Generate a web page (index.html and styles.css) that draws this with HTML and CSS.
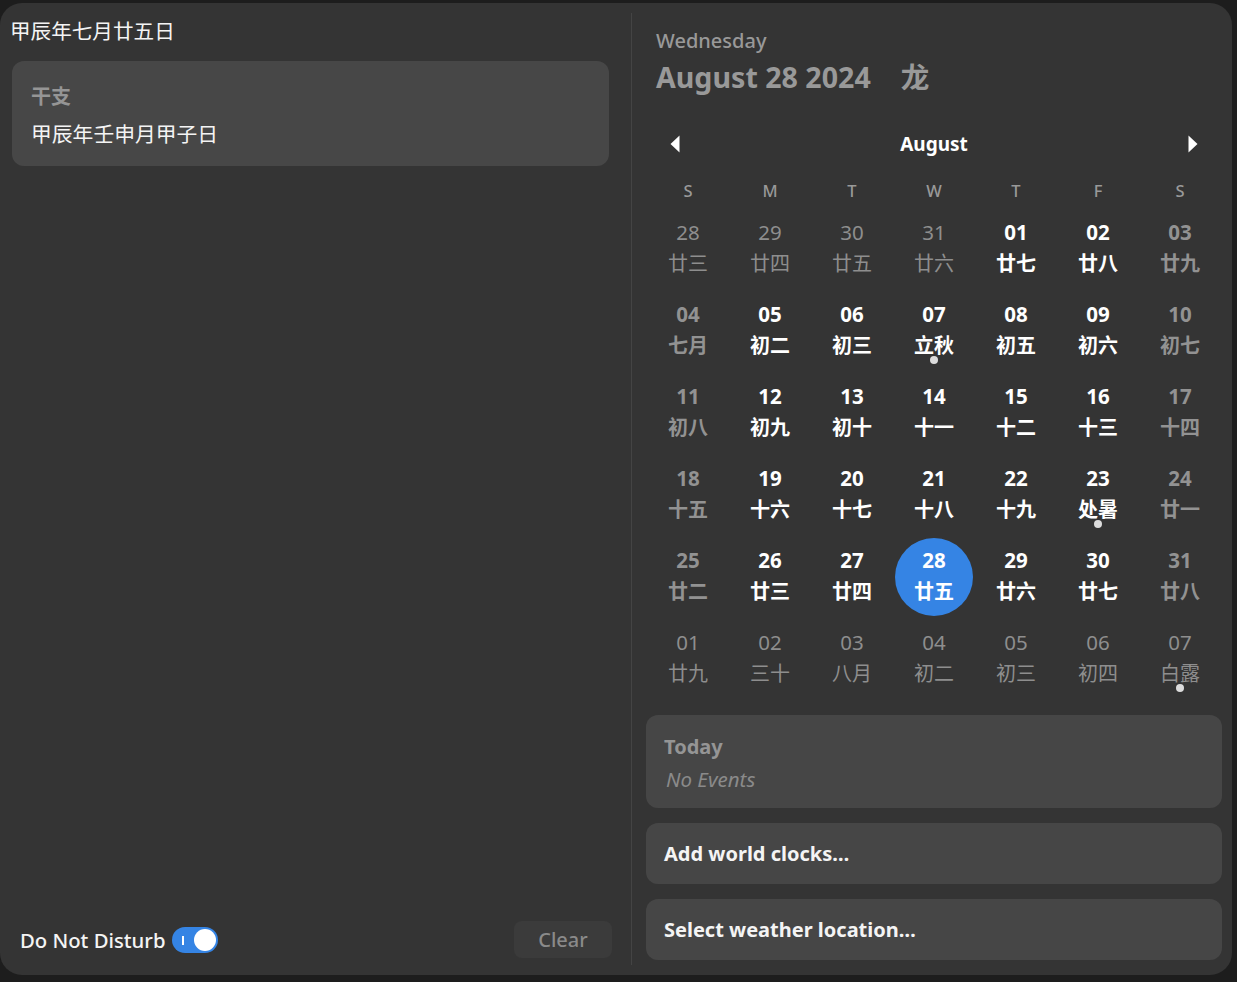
FILE: index.html
```html
<!DOCTYPE html>
<html lang="zh">
<head>
<meta charset="utf-8">
<title>Calendar</title>
<link rel="stylesheet" href="styles.css">
</head>
<body>
<div class="panel">
  <section class="left">
    <div class="lunar-title">甲辰年七月廿五日</div>
    <div class="ganzhi">
      <div class="gz-label">干支</div>
      <div class="gz-value">甲辰年壬申月甲子日</div>
    </div>
    <div class="spacer"></div>
    <div class="bottom-row">
      <div class="dnd">
        <span class="dnd-label">Do Not Disturb</span>
        <span class="switch"><span class="switch-mark"></span><span class="knob"></span></span>
      </div>
      <div class="clear-btn">Clear</div>
    </div>
  </section>
  <div class="separator"></div>
  <section class="right">
    <div class="date-head">
      <div class="weekday">Wednesday</div>
      <div class="fulldate">August 28 2024<span class="zodiac">龙</span></div>
    </div>
    <div class="month-nav">
      <span class="nav-btn"><svg width="10" height="18" viewBox="0 0 10 18"><polygon points="9.5,0.5 9.5,17.5 0.5,9" fill="#fff"/></svg></span>
      <span class="month-name">August</span>
      <span class="nav-btn"><svg width="10" height="18" viewBox="0 0 10 18"><polygon points="0.5,0.5 0.5,17.5 9.5,9" fill="#fff"/></svg></span>
    </div>
    <div class="weekdays">
      <span>S</span><span>M</span><span>T</span><span>W</span><span>T</span><span>F</span><span>S</span>
    </div>
    <div class="grid">
      <div class="cell"><div class="d other"><span class="n">28</span><span class="l">廿三</span></div></div>
      <div class="cell"><div class="d other"><span class="n">29</span><span class="l">廿四</span></div></div>
      <div class="cell"><div class="d other"><span class="n">30</span><span class="l">廿五</span></div></div>
      <div class="cell"><div class="d other"><span class="n">31</span><span class="l">廿六</span></div></div>
      <div class="cell"><div class="d"><span class="n">01</span><span class="l">廿七</span></div></div>
      <div class="cell"><div class="d"><span class="n">02</span><span class="l">廿八</span></div></div>
      <div class="cell"><div class="d wknd"><span class="n">03</span><span class="l">廿九</span></div></div>

      <div class="cell"><div class="d wknd"><span class="n">04</span><span class="l">七月</span></div></div>
      <div class="cell"><div class="d"><span class="n">05</span><span class="l">初二</span></div></div>
      <div class="cell"><div class="d"><span class="n">06</span><span class="l">初三</span></div></div>
      <div class="cell"><div class="d"><span class="n">07</span><span class="l">立秋</span><span class="dot"></span></div></div>
      <div class="cell"><div class="d"><span class="n">08</span><span class="l">初五</span></div></div>
      <div class="cell"><div class="d"><span class="n">09</span><span class="l">初六</span></div></div>
      <div class="cell"><div class="d wknd"><span class="n">10</span><span class="l">初七</span></div></div>

      <div class="cell"><div class="d wknd"><span class="n">11</span><span class="l">初八</span></div></div>
      <div class="cell"><div class="d"><span class="n">12</span><span class="l">初九</span></div></div>
      <div class="cell"><div class="d"><span class="n">13</span><span class="l">初十</span></div></div>
      <div class="cell"><div class="d"><span class="n">14</span><span class="l">十一</span></div></div>
      <div class="cell"><div class="d"><span class="n">15</span><span class="l">十二</span></div></div>
      <div class="cell"><div class="d"><span class="n">16</span><span class="l">十三</span></div></div>
      <div class="cell"><div class="d wknd"><span class="n">17</span><span class="l">十四</span></div></div>

      <div class="cell"><div class="d wknd"><span class="n">18</span><span class="l">十五</span></div></div>
      <div class="cell"><div class="d"><span class="n">19</span><span class="l">十六</span></div></div>
      <div class="cell"><div class="d"><span class="n">20</span><span class="l">十七</span></div></div>
      <div class="cell"><div class="d"><span class="n">21</span><span class="l">十八</span></div></div>
      <div class="cell"><div class="d"><span class="n">22</span><span class="l">十九</span></div></div>
      <div class="cell"><div class="d"><span class="n">23</span><span class="l">处暑</span><span class="dot"></span></div></div>
      <div class="cell"><div class="d wknd"><span class="n">24</span><span class="l">廿一</span></div></div>

      <div class="cell"><div class="d wknd"><span class="n">25</span><span class="l">廿二</span></div></div>
      <div class="cell"><div class="d"><span class="n">26</span><span class="l">廿三</span></div></div>
      <div class="cell"><div class="d"><span class="n">27</span><span class="l">廿四</span></div></div>
      <div class="cell"><div class="d today"><span class="n">28</span><span class="l">廿五</span></div></div>
      <div class="cell"><div class="d"><span class="n">29</span><span class="l">廿六</span></div></div>
      <div class="cell"><div class="d"><span class="n">30</span><span class="l">廿七</span></div></div>
      <div class="cell"><div class="d wknd"><span class="n">31</span><span class="l">廿八</span></div></div>

      <div class="cell"><div class="d other"><span class="n">01</span><span class="l">廿九</span></div></div>
      <div class="cell"><div class="d other"><span class="n">02</span><span class="l">三十</span></div></div>
      <div class="cell"><div class="d other"><span class="n">03</span><span class="l">八月</span></div></div>
      <div class="cell"><div class="d other"><span class="n">04</span><span class="l">初二</span></div></div>
      <div class="cell"><div class="d other"><span class="n">05</span><span class="l">初三</span></div></div>
      <div class="cell"><div class="d other"><span class="n">06</span><span class="l">初四</span></div></div>
      <div class="cell"><div class="d other"><span class="n">07</span><span class="l">白露</span><span class="dot"></span></div></div>
    </div>
    <div class="card events">
      <div class="ev-title">Today</div>
      <div class="ev-none">No Events</div>
    </div>
    <div class="card action">Add world clocks…</div>
    <div class="card action">Select weather location…</div>
  </section>
</div>
</body>
</html>
```
FILE: styles.css
```css
* { box-sizing: border-box; margin: 0; padding: 0; }

body {
  background: #1d1d1d;
  font-family: "Noto Sans", "Noto Sans CJK SC", sans-serif;
  color: #fff;
  width: 1237px;
  height: 982px;
  overflow: hidden;
}

.panel {
  margin-top: 3px;
  width: 1232px;
  height: 972px;
  background: #343434;
  border-radius: 22px;
  display: flex;
}

/* ---------- left column ---------- */
.left {
  width: 631px;
  display: flex;
  flex-direction: column;
  padding: 14px 0 17px 10px;
}

.lunar-title {
  font-size: 20.6px;
  line-height: 28px;
  color: #f4f4f4;
}

.ganzhi {
  margin: 16px 0 0 2px;
  width: 597px;
  background: #474747;
  border-radius: 12px;
  padding: 22px 19px 18px;
}

.gz-label {
  font-size: 20px;
  line-height: 28px;
  font-weight: 700;
  color: #959595;
}

.gz-value {
  margin-top: 9px;
  font-size: 20.8px;
  line-height: 28px;
  color: #f4f4f4;
}

.spacer { flex: 1; }

.bottom-row {
  width: 602px;
  height: 37px;
  display: flex;
  align-items: center;
  justify-content: space-between;
  padding-left: 10px;
}

.dnd {
  display: flex;
  align-items: center;
  gap: 7px;
}

.dnd-label {
  font-size: 20.3px;
  font-weight: 500;
  color: #f4f4f4;
}

.switch {
  position: relative;
  width: 46px;
  height: 26px;
  border-radius: 13px;
  background: #3584e4;
  display: block;
}

.switch-mark {
  position: absolute;
  left: 10px;
  top: 9px;
  width: 2px;
  height: 9px;
  background: #fff;
}

.knob {
  position: absolute;
  right: 2px;
  top: 2px;
  width: 22px;
  height: 22px;
  border-radius: 50%;
  background: #fff;
}

.clear-btn {
  width: 98px;
  height: 37px;
  border-radius: 8px;
  background: #3b3b3b;
  color: #8a8a8a;
  font-size: 20px;
  font-weight: 500;
  display: flex;
  align-items: center;
  justify-content: center;
}

.separator {
  width: 1px;
  margin: 10px 0;
  background: #444;
}

/* ---------- right column ---------- */
.right {
  width: 600px;
  padding: 24px 10px 15px 14px;
  display: flex;
  flex-direction: column;
}

.date-head { padding-left: 10px; }

.weekday {
  font-size: 20px;
  line-height: 28px;
  font-weight: 500;
  color: #999;
}

.fulldate {
  margin-top: 4px;
  font-size: 28.6px;
  line-height: 36px;
  font-weight: 700;
  color: #999;
}

.zodiac { margin-left: 30px; }

.month-nav {
  margin: 29px 0 0 1px;
  width: 574px;
  height: 40px;
  display: flex;
  align-items: center;
  justify-content: space-between;
}

.nav-btn {
  width: 56px;
  height: 40px;
  display: flex;
  align-items: center;
  justify-content: center;
}

.month-name {
  font-size: 19px;
  font-weight: 700;
  color: #fff;
}

.weekdays {
  margin: 8px 0 0 1px;
  width: 574px;
  height: 36px;
  display: grid;
  grid-template-columns: repeat(7, 82px);
  align-items: center;
  justify-items: center;
  font-size: 16.5px;
  font-weight: 500;
  color: #999;
}

.grid {
  margin-left: 1px;
  width: 574px;
  display: grid;
  grid-template-columns: repeat(7, 82px);
  grid-auto-rows: 82px;
}

.cell {
  display: flex;
  align-items: center;
  justify-content: center;
}

.d {
  position: relative;
  width: 78px;
  height: 78px;
  border-radius: 50%;
  display: flex;
  flex-direction: column;
  align-items: center;
  justify-content: center;
  padding-bottom: 1px;
  font-weight: 700;
  color: #fff;
}

.d .n {
  font-size: 20.5px;
  line-height: 26px;
}

.d .l {
  margin-top: 4px;
  font-size: 20px;
  line-height: 30px;
}

.d.wknd { color: #929292; }

.d.other {
  color: #8e8e8e;
  font-weight: 400;
}

.d.today { background: #3584e4; }

.dot {
  position: absolute;
  top: 64px;
  left: 50%;
  margin-left: -4px;
  width: 8px;
  height: 8px;
  border-radius: 50%;
  background: #dcdcdc;
  filter: blur(0.6px);
}

.card {
  background: #464646;
  border-radius: 12px;
  margin-top: 15px;
  padding-left: 18px;
}

.events {
  height: 93px;
  padding-top: 18px;
}

.ev-title {
  font-size: 20px;
  line-height: 28px;
  font-weight: 700;
  color: #959595;
}

.ev-none {
  margin-top: 4px;
  font-size: 20.5px;
  line-height: 28px;
  font-style: italic;
  color: #8a8a8a;
  padding-left: 2px;
}

.action {
  height: 61px;
  display: flex;
  align-items: center;
  font-size: 20px;
  font-weight: 700;
  color: #f4f4f4;
}
```
